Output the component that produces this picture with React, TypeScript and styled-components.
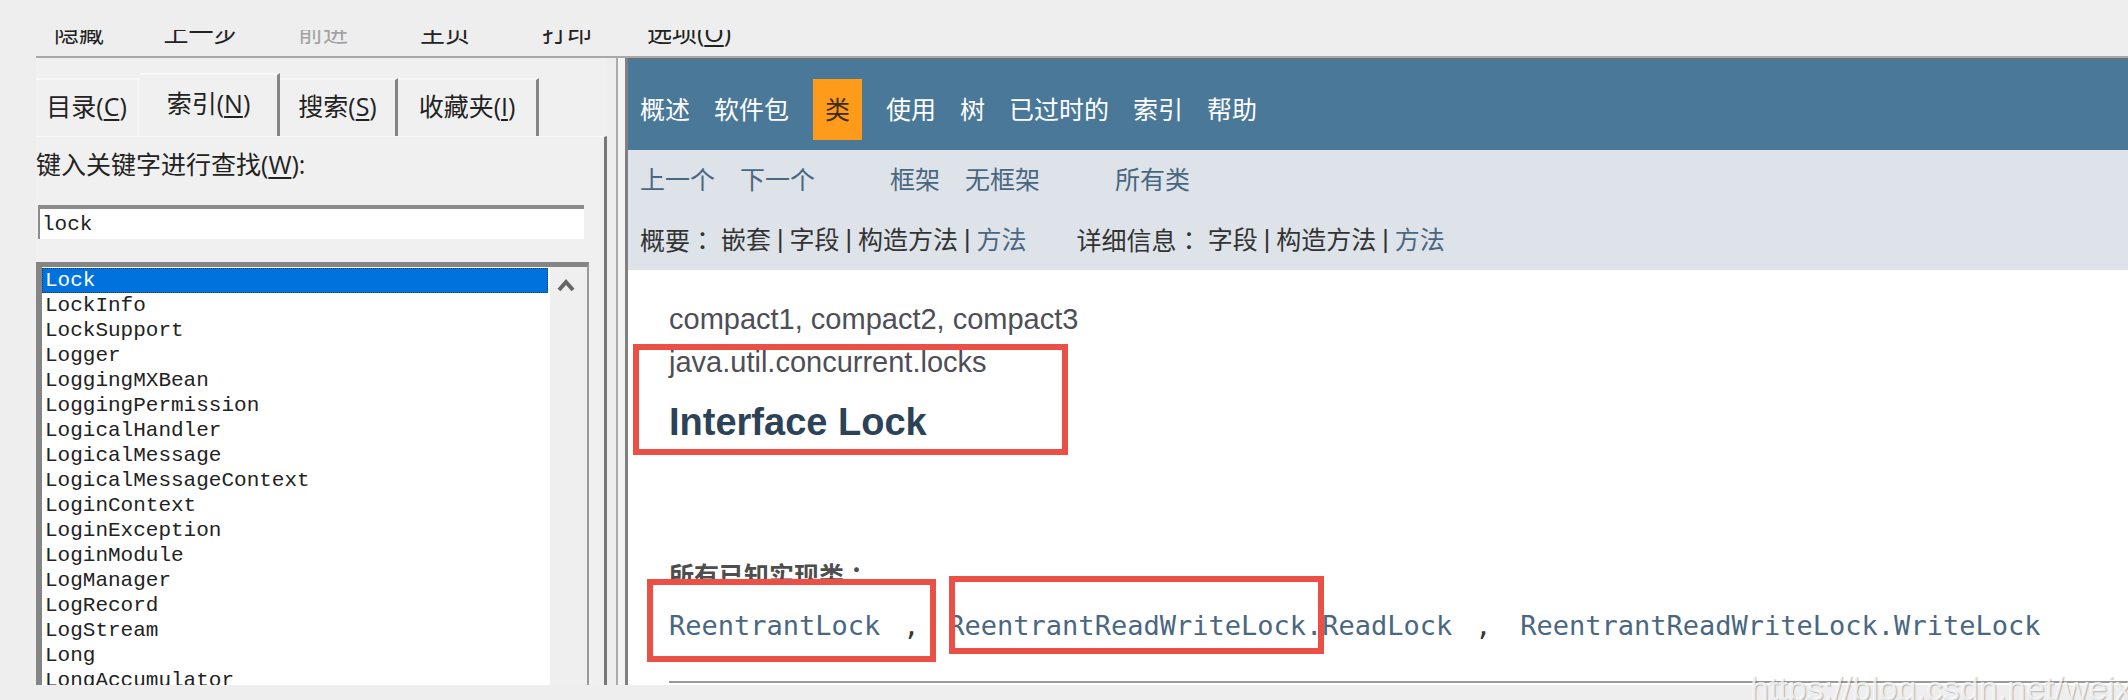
import React, { useState } from "react";
import styled, { createGlobalStyle } from "styled-components";

const GlobalStyle = createGlobalStyle`
  * { box-sizing: border-box; }
  body {
    margin: 0;
    background: #eeeeee;
    font-family: "Open Sans", "Noto Sans CJK SC", sans-serif;
    font-size: 25px;
    line-height: 30px;
    color: #222;
  }
  button { font: inherit; color: inherit; background: none; border: 0; padding: 0; }
  a { color: inherit; text-decoration: none; }
  u { text-decoration-thickness: 2px; text-underline-offset: 3px; }
`;

const Viewer = styled.div`
  position: relative;
  overflow: hidden;
  padding: 30px 0 15px;
`;

const Toolbar = styled.div`
  display: flex;
  align-items: flex-end;
  height: 26px;
  padding: 0 0 9px 18px;
  overflow: hidden;
`;

const ToolButton = styled.button`
  flex: none;
  width: 122px;
  white-space: nowrap;
  &:disabled { color: #a3a3a3; }
`;

const Frame = styled.div`
  display: flex;
  margin-left: 36px;
  border-top: 2px solid #a9a9a9;
`;

const Sidebar = styled.aside`
  flex: none;
  width: 571px;
  padding-top: 15px;
  background: #f0f0f0;
`;

const Tabs = styled.div`
  display: flex;
  align-items: flex-end;
  height: 63px;
`;

const Tab = styled.button<{ $width: number; $active?: boolean; $flat?: boolean }>`
  width: ${(p) => p.$width}px;
  height: ${(p) => (p.$active ? 63 : 58)}px;
  padding-bottom: ${(p) => (p.$active ? 6 : 4)}px;
  border-top: 2px solid #f8f8f8;
  border-right: 3px solid ${(p) => (p.$flat ? "#f4f4f4" : "#858585")};
  white-space: nowrap;
`;

const TabPanel = styled.div`
  padding: 12px 15px 0 0;
  border-top: 1px solid #f7f7f7;
  border-right: 3px solid #777;
`;

const FieldLabel = styled.label`
  display: block;
  margin-bottom: 26px;
`;

const KeywordInput = styled.input`
  display: block;
  width: 546px;
  height: 34px;
  margin-left: 2px;
  padding: 0 2px;
  border: 0;
  border-top: 4px solid #8c8c8c;
  border-left: 2px solid #8c8c8c;
  background: #fff;
  font: 21px/30px "Liberation Mono", monospace;
  color: #222;
  outline: none;
`;

const ListFrame = styled.div`
  display: flex;
  height: 423px;
  margin-top: 23px;
  overflow: hidden;
  border: solid #858585;
  border-width: 5px 2px 0 6px;
  border-right-color: #999;
  background: #fff;
`;

const TopicList = styled.ul`
  flex: 1;
  margin: 0;
  padding: 1px 0 0;
  list-style: none;
  font: 21px/25px "Liberation Mono", monospace;
`;

const Topic = styled.li<{ $selected: boolean }>`
  margin-right: 2px;
  padding-left: 3px;
  cursor: default;
  color: ${(p) => (p.$selected ? "#fff" : "#222")};
  background: ${(p) => (p.$selected ? "#0072de" : "transparent")};
  outline: ${(p) => (p.$selected ? "1px dotted #1d3f66" : "none")};
  outline-offset: -1px;
`;

const ScrollTrack = styled.div`
  width: 37px;
  padding-top: 10px;
  background: #efefef;
`;

const ScrollUp = styled.button`
  display: block;
  margin-left: 6px;
  line-height: 0;
`;

const Splitter = styled.div`
  flex: none;
  width: 12px;
  margin-left: 9px;
  border-left: 2px solid #aaa;
  border-right: 3px solid #808080;
  background: #f3f3f3;
`;

const Doc = styled.main`
  flex: 1;
  min-width: 0;
  background: #fff;
`;

const TopNav = styled.nav`
  display: flex;
  align-items: center;
  gap: 24px;
  height: 92px;
  padding: 8px 12px 0;
  border-top: 2px solid #5f7280;
  background: #4a7898;
  color: #fff;
`;

const CurrentPage = styled.span`
  padding: 15px 12px 16px;
  background: #ff9b1b;
  color: #3c2a12;
`;

const SubNav = styled.nav`
  height: 120px;
  padding: 14px 12px 0;
  background: #dde3e9;
  color: #333;
`;

const NavRow = styled.div`
  display: flex;
  gap: 75px;
  margin-bottom: 30px;
  color: #4a6782;
`;

const NavGroup = styled.div`
  display: flex;
  gap: 25px;
`;

const SummaryRow = styled.div`
  display: flex;
  gap: 50px;
`;

const SummaryGroup = styled.div`
  display: flex;
  gap: 6px;
  a { color: #4a6782; }
`;

const Pipe = styled.span`
  font-family: "Liberation Sans", sans-serif;
`;

const Colon = styled.span`
  font-family: "Noto Sans CJK TC", sans-serif;
`;

const Article = styled.article`
  position: relative;
  padding: 31px 0 0 41px;
  color: #4e4e57;
  font-family: "Liberation Sans", "Noto Sans CJK SC", sans-serif;
`;

const MetaLine = styled.div`
  margin-bottom: 7px;
  font-size: 29px;
  line-height: 36px;
`;

const Title = styled.h1`
  margin: 20px 0 0;
  font-size: 38px;
  line-height: 44px;
  color: #2c4257;
`;

const ImplTerm = styled.h2`
  height: 21px;
  margin: 115px 0 0;
  overflow: hidden;
  font-size: 25px;
  line-height: 30px;
  color: #4e4e4e;
`;

const ImplList = styled.div`
  display: flex;
  margin: 26px 0 35px;
  font: 27px/40px "DejaVu Sans Mono", monospace;
  white-space: nowrap;
  color: #353833;
  a { color: #4a6782; }
`;

const Comma = styled.span`
  width: 68px;
  padding-left: 23px;
`;

const Rule = styled.hr`
  margin: 0;
  border: 0;
  border-top: 2px solid #999;
`;

const Highlight = styled.div<{ $x: number; $y: number; $w: number; $h: number }>`
  position: absolute;
  left: ${(p) => p.$x}px;
  top: ${(p) => p.$y}px;
  width: ${(p) => p.$w}px;
  height: ${(p) => p.$h}px;
  border: 6px solid #ec4f45;
  pointer-events: none;
`;

const Watermark = styled.div`
  position: absolute;
  right: 0;
  bottom: -8px;
  width: 378px;
  overflow: hidden;
  white-space: nowrap;
  font: 34px/40px "Liberation Sans", sans-serif;
  color: rgba(255, 255, 255, 0.75);
  text-shadow: 1px 1px 1px rgba(0, 0, 0, 0.25);
`;

const topics = [
  "Lock", "LockInfo", "LockSupport", "Logger", "LoggingMXBean", "LoggingPermission",
  "LogicalHandler", "LogicalMessage", "LogicalMessageContext", "LoginContext",
  "LoginException", "LoginModule", "LogManager", "LogRecord", "LogStream", "Long",
  "LongAccumulator",
];

export default function App() {
  const [keyword, setKeyword] = useState("lock");
  const [selected, setSelected] = useState("Lock");

  return (
    <Viewer>
      <GlobalStyle />
      <Toolbar>
        <ToolButton>隐藏</ToolButton>
        <ToolButton>上一步</ToolButton>
        <ToolButton disabled>前进</ToolButton>
        <ToolButton>主页</ToolButton>
        <ToolButton>打印</ToolButton>
        <ToolButton>选项(<u>O</u>)</ToolButton>
      </Toolbar>
      <Frame>
        <Sidebar>
          <Tabs role="tablist">
            <Tab role="tab" $width={104} $flat>目录(<u>C</u>)</Tab>
            <Tab role="tab" $width={140} $active aria-selected>索引(<u>N</u>)</Tab>
            <Tab role="tab" $width={118}>搜索(<u>S</u>)</Tab>
            <Tab role="tab" $width={141}>收藏夹(<u>I</u>)</Tab>
          </Tabs>
          <TabPanel role="tabpanel">
            <FieldLabel htmlFor="keyword">键入关键字进行查找(<u>W</u>):</FieldLabel>
            <KeywordInput id="keyword" value={keyword} onChange={(e) => setKeyword(e.target.value)} />
            <ListFrame>
              <TopicList role="listbox">
                {topics.map((t) => (
                  <Topic key={t} role="option" aria-selected={t === selected}
                    $selected={t === selected} onClick={() => setSelected(t)}>
                    {t}
                  </Topic>
                ))}
              </TopicList>
              <ScrollTrack>
                <ScrollUp aria-label="向上滚动">
                  <svg width="20" height="16" viewBox="0 0 20 16">
                    <path d="M3 13 L10 5 L17 13" fill="none" stroke="#666" strokeWidth="4" />
                  </svg>
                </ScrollUp>
              </ScrollTrack>
            </ListFrame>
          </TabPanel>
        </Sidebar>
        <Splitter />
        <Doc>
          <TopNav>
            <a href="#overview">概述</a>
            <a href="#package">软件包</a>
            <CurrentPage>类</CurrentPage>
            <a href="#use">使用</a>
            <a href="#tree">树</a>
            <a href="#deprecated">已过时的</a>
            <a href="#index">索引</a>
            <a href="#help">帮助</a>
          </TopNav>
          <SubNav>
            <NavRow>
              <NavGroup>
                <a href="#prev">上一个</a>
                <a href="#next">下一个</a>
              </NavGroup>
              <NavGroup>
                <a href="#frames">框架</a>
                <a href="#noframes">无框架</a>
              </NavGroup>
              <NavGroup>
                <a href="#all">所有类</a>
              </NavGroup>
            </NavRow>
            <SummaryRow>
              <SummaryGroup>
                <span>概要<Colon>：</Colon></span>
                <span>嵌套</span><Pipe>|</Pipe>
                <span>字段</span><Pipe>|</Pipe>
                <span>构造方法</span><Pipe>|</Pipe>
                <a href="#method-summary">方法</a>
              </SummaryGroup>
              <SummaryGroup>
                <span>详细信息<Colon>：</Colon></span>
                <span>字段</span><Pipe>|</Pipe>
                <span>构造方法</span><Pipe>|</Pipe>
                <a href="#method-detail">方法</a>
              </SummaryGroup>
            </SummaryRow>
          </SubNav>
          <Article>
            <MetaLine>compact1, compact2, compact3</MetaLine>
            <MetaLine>java.util.concurrent.locks</MetaLine>
            <Title>Interface Lock</Title>
            <ImplTerm>所有已知实现类<Colon>：</Colon></ImplTerm>
            <ImplList>
              <a href="#ReentrantLock">ReentrantLock</a>
              <Comma>,</Comma>
              <a href="#ReadLock">ReentrantReadWriteLock.ReadLock</a>
              <Comma>,</Comma>
              <a href="#WriteLock">ReentrantReadWriteLock.WriteLock</a>
            </ImplList>
            <Rule />
            <Highlight $x={5} $y={74} $w={435} $h={111} />
            <Highlight $x={19} $y={309} $w={289} $h={83} />
            <Highlight $x={321} $y={306} $w={375} $h={78} />
          </Article>
        </Doc>
      </Frame>
      <Watermark>https://blog.csdn.net/weixin</Watermark>
    </Viewer>
  );
}
